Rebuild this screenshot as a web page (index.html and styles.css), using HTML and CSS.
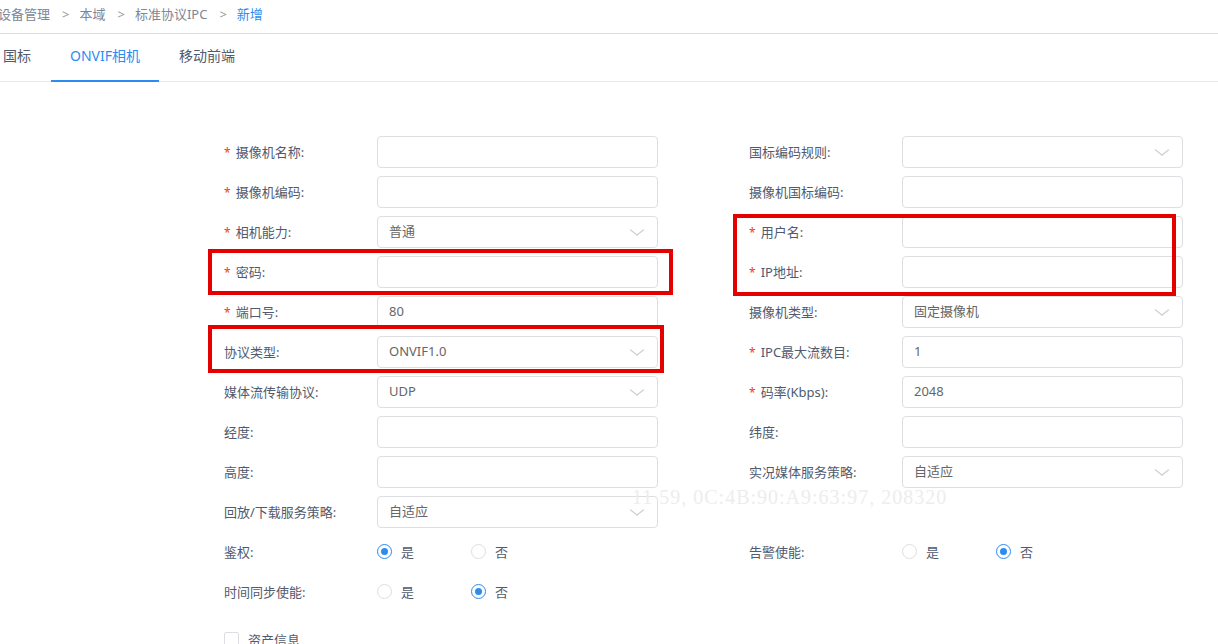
FILE: index.html
```html
<!DOCTYPE html>
<html lang="zh-CN">
<head>
<meta charset="utf-8">
<title>新增</title>
<link rel="stylesheet" href="styles.css">
</head>
<body>
<div class="page">
  <div class="breadcrumb">
    <span class="crumb">设备管理</span><span class="sep">&gt;</span>
    <span class="crumb">本域</span><span class="sep">&gt;</span>
    <span class="crumb">标准协议IPC</span><span class="sep">&gt;</span>
    <span class="crumb current">新增</span>
  </div>
  <div class="tabs">
    <div class="tab">国标</div>
    <div class="tab active">ONVIF相机</div>
    <div class="tab">移动前端</div>
  </div>

  <div class="form">
    <div class="grid">
      <div class="field"><label class="lbl"><i class="req">*</i>摄像机名称:</label><div class="input"></div></div>
      <div class="field"><label class="lbl">国标编码规则:</label><div class="input select"></div></div>

      <div class="field"><label class="lbl"><i class="req">*</i>摄像机编码:</label><div class="input"></div></div>
      <div class="field"><label class="lbl">摄像机国标编码:</label><div class="input"></div></div>

      <div class="field"><label class="lbl"><i class="req">*</i>相机能力:</label><div class="input select">普通</div></div>
      <div class="field"><label class="lbl"><i class="req">*</i>用户名:</label><div class="input"></div></div>

      <div class="field"><label class="lbl"><i class="req">*</i>密码:</label><div class="input"></div></div>
      <div class="field"><label class="lbl"><i class="req">*</i>IP地址:</label><div class="input"></div></div>

      <div class="field"><label class="lbl"><i class="req">*</i>端口号:</label><div class="input">80</div></div>
      <div class="field"><label class="lbl">摄像机类型:</label><div class="input select">固定摄像机</div></div>

      <div class="field"><label class="lbl">协议类型:</label><div class="input select">ONVIF1.0</div></div>
      <div class="field"><label class="lbl"><i class="req">*</i>IPC最大流数目:</label><div class="input">1</div></div>

      <div class="field"><label class="lbl">媒体流传输协议:</label><div class="input select">UDP</div></div>
      <div class="field"><label class="lbl"><i class="req">*</i>码率(Kbps):</label><div class="input">2048</div></div>

      <div class="field"><label class="lbl">经度:</label><div class="input"></div></div>
      <div class="field"><label class="lbl">纬度:</label><div class="input"></div></div>

      <div class="field"><label class="lbl">高度:</label><div class="input"></div></div>
      <div class="field"><label class="lbl">实况媒体服务策略:</label><div class="input select">自适应</div></div>

      <div class="field"><label class="lbl">回放/下载服务策略:</label><div class="input select">自适应</div></div>
      <div class="field"></div>

      <div class="field"><label class="lbl">鉴权:</label>
        <div class="radios"><span class="radio"><span class="dot checked"></span>是</span><span class="radio"><span class="dot"></span>否</span></div>
      </div>
      <div class="field"><label class="lbl">告警使能:</label>
        <div class="radios"><span class="radio"><span class="dot"></span>是</span><span class="radio"><span class="dot checked"></span>否</span></div>
      </div>

      <div class="field"><label class="lbl">时间同步使能:</label>
        <div class="radios"><span class="radio"><span class="dot"></span>是</span><span class="radio"><span class="dot checked"></span>否</span></div>
      </div>
      <div class="field"></div>
    </div>
    <div class="check-row"><span class="checkbox"></span>资产信息</div>
  </div>

  <div class="watermark">11 59, 0C:4B:90:A9:63:97, 208320</div>

  <div class="mark mark-pwd"></div>
  <div class="mark mark-proto"></div>
  <div class="mark mark-user"></div>
</div>
</body>
</html>
```

FILE: styles.css
```css
* { box-sizing: border-box; }
html, body {
  margin: 0;
  padding: 0;
  background: #fff;
  overflow: hidden;
}
body {
  font-family: "Noto Sans", "Noto Sans CJK SC", sans-serif;
  font-size: 13px;
  color: #515a6e;
}
.page {
  position: relative;
  width: 1218px;
  height: 644px;
  overflow: hidden;
}

/* breadcrumb */
.breadcrumb {
  height: 34px;
  border-bottom: 1px solid #dcdee2;
  display: flex;
  align-items: center;
  padding-bottom: 6px;
  margin-left: -2px;
  color: #808695;
  font-size: 13px;
}
.crumb { line-height: 16px; }
.crumb.current { color: #2d8cf0; }
.sep { margin: 0 10px 0 12px; color: #999; }

/* tabs */
.tabs {
  display: flex;
  height: 48px;
  border-bottom: 1px solid #e8eaec;
  margin-left: -17px;
}
.tab {
  padding: 0 20px;
  font-size: 14px;
  line-height: 44px;
  color: #515a6e;
  border-bottom: 2px solid transparent;
  margin-bottom: -1px;
  height: 48px;
}
.tab.active {
  color: #2d8cf0;
  border-bottom-color: #2d8cf0;
  padding: 0 19px;
}

/* form */
.form {
  padding: 54px 0 0 224px;
}
.grid {
  display: grid;
  grid-template-columns: 434px 434px;
  column-gap: 91px;
  grid-auto-rows: 32px;
  row-gap: 8px;
}
.field {
  display: flex;
  align-items: center;
}
.lbl {
  width: 153px;
  flex: none;
  color: #515a6e;
  font-size: 13px;
  white-space: nowrap;
  padding-bottom: 2px;
}
.req {
  font-style: normal;
  color: #ed4014;
  margin-right: 5px;
  font-size: 12px;
}
.input {
  position: relative;
  width: 281px;
  height: 32px;
  border: 1px solid #dcdee2;
  border-radius: 4px;
  background: #fff;
  padding: 0 11px;
  line-height: 28px;
  color: #666;
  font-size: 13px;
}
.select::after {
  content: "";
  position: absolute;
  right: 16px;
  top: 9px;
  width: 7px;
  height: 7px;
  border-right: 1px solid #c9ccd2;
  border-bottom: 1px solid #c9ccd2;
  transform: scaleX(1.3) rotate(45deg);
}

/* radios */
.radios { display: flex; }
.radio {
  width: 94px;
  display: flex;
  align-items: center;
  color: #515a6e;
  font-size: 13px;
  padding-bottom: 1px;
}
.dot {
  width: 15px;
  height: 15px;
  border: 1px solid #dcdee2;
  border-radius: 50%;
  margin-right: 9px;
  position: relative;
  flex: none;
}
.dot.checked { border-color: #2d8cf0; }
.dot.checked::after {
  content: "";
  position: absolute;
  left: 3px;
  top: 3px;
  width: 7px;
  height: 7px;
  border-radius: 50%;
  background: #2d8cf0;
}

/* checkbox */
.check-row {
  margin-top: 22px;
  display: flex;
  align-items: center;
  color: #515a6e;
}
.checkbox {
  width: 15px;
  height: 15px;
  border: 1px solid #dcdee2;
  border-radius: 2px;
  margin-right: 9px;
}

/* overlays */
.watermark {
  position: absolute;
  left: 632px;
  top: 486px;
  font-family: "Liberation Serif", serif;
  font-size: 20px;
  letter-spacing: 1px;
  color: #ededed;
  white-space: nowrap;
  pointer-events: none;
}
.mark {
  position: absolute;
  border: 4px solid #e50000;
  pointer-events: none;
}
.mark-pwd { left: 208px; top: 249px; width: 465px; height: 46px; }
.mark-proto { left: 208px; top: 325px; width: 456px; height: 48px; }
.mark-user { left: 733px; top: 214px; width: 443px; height: 82px; }
```
